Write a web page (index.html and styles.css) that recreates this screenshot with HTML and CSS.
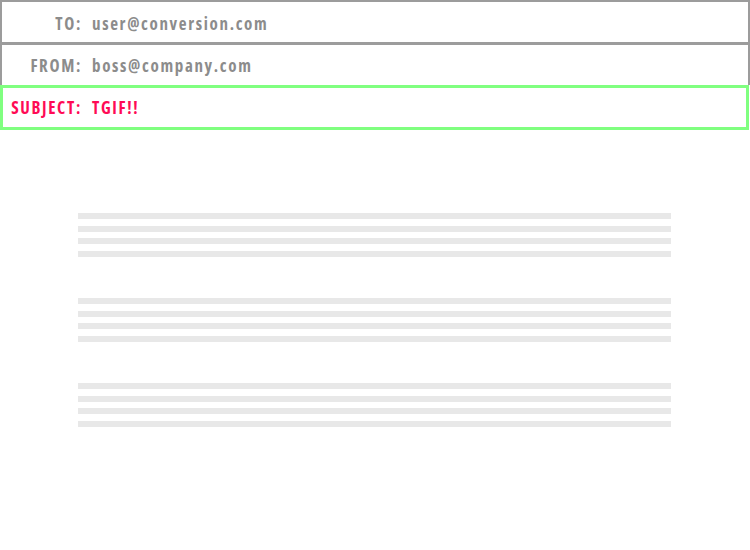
FILE: index.html
```html
<!DOCTYPE html>
<html>
<head>
<meta charset="utf-8">
<link rel="stylesheet" href="styles.css">
</head>
<body>
<div class="header">
  <div class="row row-to"><span class="label">TO:</span><span class="value">user@conversion.com</span></div>
  <div class="row row-from"><span class="label">FROM:</span><span class="value">boss@company.com</span></div>
  <div class="row row-subject"><span class="label">SUBJECT:</span><span class="value">TGIF!!</span></div>
</div>
<div class="body">
  <div class="para"><div class="line"></div><div class="line"></div><div class="line"></div><div class="line"></div></div>
  <div class="para"><div class="line"></div><div class="line"></div><div class="line"></div><div class="line"></div></div>
  <div class="para"><div class="line"></div><div class="line"></div><div class="line"></div><div class="line"></div></div>
</div>
</body>
</html>
```
FILE: styles.css
```css
html, body {
  margin: 0;
  padding: 0;
  background: #ffffff;
}
body {
  width: 750px;
  height: 550px;
  overflow: hidden;
  font-family: "Open Sans", "DejaVu Sans Condensed", sans-serif;
  font-stretch: 75%;
  font-weight: 700;
  font-size: 17px;
  letter-spacing: 1.65px;
}
.header {
  display: flex;
  flex-direction: column;
}
.row {
  display: flex;
  align-items: center;
  gap: 10px;
  box-sizing: border-box;
  color: #8c8c8c;
}
.row-to {
  height: 45px;
  padding-top: 2px;
  border: 2px solid #9c9c9c;
  border-bottom-width: 3px;
}
.row-from {
  height: 40px;
  border-left: 2px solid #9c9c9c;
  border-right: 2px solid #9c9c9c;
}
.row-subject {
  height: 45px;
  width: 749px;
  border: 3px solid #80ff80;
  color: #ff0a55;
}
.label {
  width: 80px;
  text-align: right;
  flex: none;
}
.row-subject .label { width: 79px; }
.body {
  display: flex;
  flex-direction: column;
  gap: 41px;
  padding: 83px 0 0 78px;
}
.para {
  display: flex;
  flex-direction: column;
  gap: 6.67px;
}
.line {
  width: 593px;
  height: 6px;
  background: #e8e8e8;
}
```
